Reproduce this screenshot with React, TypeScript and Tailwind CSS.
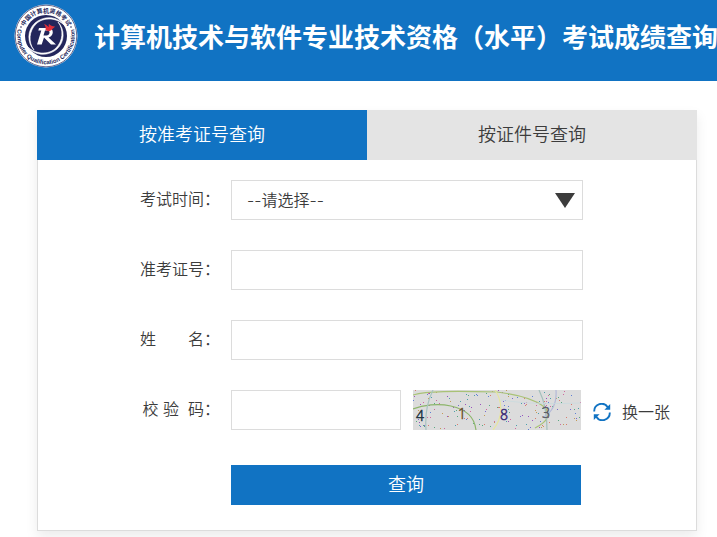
import { useState } from "react";
import clsx from "clsx";

const tabs = [
  { id: "ticket", label: "按准考证号查询" },
  { id: "cert", label: "按证件号查询" }
];

const SPECK_COLORS = ["#7a6ad0", "#cf6a9e", "#5aa982", "#c49a58", "#5f80d4", "#9a52bd", "#4d9fac", "#d87c6e"];

// small seeded generator, keeps the specks stable between renders
function makeSpecks(count: number) {
  let seed = 41837;
  const next = () => {
    seed = (seed * 16807) % 2147483647;
    return seed / 2147483647;
  };
  return Array.from({ length: count }, () => ({
    x: Math.floor(next() * 168),
    y: Math.floor(next() * 40),
    color: SPECK_COLORS[Math.floor(next() * SPECK_COLORS.length)]
  }));
}

const specks = makeSpecks(170);

function Logo() {
  return (
    <svg viewBox="0 0 64 64" className="size-16 shrink-0" role="img" aria-label="中国计算机资格考试">
      <defs>
        <path id="ring-top" d="M8.5 32a23.5 23.5 0 0 1 47 0" />
        <path id="ring-bottom" d="M4.2 24a28.8 28.8 0 1 0 55.6 0" />
      </defs>
      <circle cx="32" cy="32" r="31.5" fill="#fff" />
      <circle cx="32" cy="32" r="30.8" fill="none" stroke="#25285c" strokeWidth="0.7" />
      <text fontSize="6" fontWeight="700" fill="#25285c" className="font-['Noto_Sans_CJK_SC',sans-serif]">
        <textPath href="#ring-top" startOffset="50%" textAnchor="middle">
          中国计算机资格考试
        </textPath>
      </text>
      <text fontSize="6" fontWeight="700" fill="#25285c" className="font-['Liberation_Sans',sans-serif]">
        <textPath href="#ring-bottom" startOffset="50%" textAnchor="middle">
          Computer Qualification Certification
        </textPath>
      </text>
      <circle cx="7" cy="23" r="0.8" fill="#25285c" />
      <circle cx="57" cy="23" r="0.8" fill="#25285c" />
      <circle cx="32" cy="32" r="21" fill="#23265b" />
      {/* two crescents chasing each other round the R */}
      <path d="M51 22C43 13 29 13 22 20s-8 18-2 26c-7-7-7-20 1-27s22-8 30 3z" fill="#fff" stroke="#fff" strokeWidth="0.6" />
      <path d="M13 42c8 9 22 9 29 2s8-18 2-26c7 7 7 20-1 27s-22 8-30-3z" fill="#fff" stroke="#fff" strokeWidth="0.6" />
      <path
        d="M25 24h9.500c6 0 5.500 8.500 0 9.500l7.500 7h-5l-7-7-2.300 7H23l4.300-14h-3zM31 26.500l-1.500 5h3c3.500 0 4.200-5 1-5z"
        fill="#fff"
      />
      <path d="M30 20c2 .5 3 2 5 3-.5-1.500-.4-2 0-3 1.500 1.500 3 2.500 6 2.500-1 1.500-2.500 2-3.500 3.500-1.500 1.500-4 1.500-6 0 .5-2 0-4-1.500-6z" fill="#df2f3a" />
    </svg>
  );
}

function Captcha() {
  return (
    <svg viewBox="0 0 168 40" className="ml-3 h-10 w-[168px] shrink-0" role="img" aria-label="校验码图片">
      <rect width="168" height="40" fill="#dcdcdc" />
      {specks.map((s, i) => (
        <rect key={i} x={s.x} y={s.y} width="1" height="1" fill={s.color} />
      ))}
      <g fill="none" strokeWidth="1.2">
        <path d="M0 5C14 1 40 1 84 2c24 3 38 8 46 14 10 8 4 16-8 22" stroke="#a9c276" />
        <path d="M0 19C20 11 60 12 63 40" stroke="#8db56b" />
        <path d="M20 0c-6 12-8 26-7 40" stroke="#a8c4c0" />
        <path d="M82 0c8 12 8 28-2 40" stroke="#e6e6a0" />
        <path d="M126 0c6 12 8 26 8 40" stroke="#a3bfbb" />
        <path d="M143 0c1 14-4 22-12 27" stroke="#b4b9d8" />
        <path d="M88 10c24 4 54 4 80 3" stroke="#c9dade" strokeWidth="0.8" />
      </g>
      <g fontSize="14" strokeWidth="0.5" className="font-['Noto_Sans',sans-serif]">
        <text x="3" y="31" fill="#1d3340" stroke="#1d3340">4</text>
        <text x="45" y="29" fill="#6b5030" stroke="#6b5030">1</text>
        <text x="87" y="30" fill="#3a2b78" stroke="#3a2b78">8</text>
        <text x="129" y="28" fill="#5a5c68" stroke="#5a5c68">3</text>
      </g>
    </svg>
  );
}

function RefreshIcon() {
  return (
    <svg viewBox="0 0 18 18" className="size-[18px]" aria-hidden="true">
      <path d="M1.200 8.400A7.400 7.400 0 0 1 14.800 4.200M16.800 9.600A7.400 7.400 0 0 1 3.200 13.800" fill="none" stroke="#1173c3" strokeWidth="1.9" />
      <path d="M17.200 1v5.800h-5.800zM.8 17v-5.800h5.800z" fill="#1173c3" />
    </svg>
  );
}

const labelClass = "w-[182px] shrink-0 whitespace-pre text-right leading-[38px]";
const fieldClass = "h-10 min-w-0 border border-[#dcdcdc] bg-white px-[15px] outline-none";

export default function App() {
  const [tab, setTab] = useState("ticket");

  return (
    <div className="min-h-screen overflow-hidden bg-white font-[Inter,'Noto_Sans_CJK_SC',sans-serif] text-base font-[350] text-[#3c3c3c]">
      <header className="flex h-[81px] gap-4 bg-[#1173c3] pt-1 pl-[14px]">
        <Logo />
        <h1 className="pt-3.5 text-[26px] leading-10 font-bold whitespace-nowrap text-white">
          计算机技术与软件专业技术资格（水平）考试成绩查询
        </h1>
      </header>

      <main className="pt-[29px] pr-5 pb-[6px] pl-[37px]">
        <div className="shadow-[0_6px_12px_rgba(0,0,0,0.08)]">
          <div role="tablist" className="grid grid-cols-2">
            {tabs.map((t) => (
              <button
                key={t.id}
                type="button"
                role="tab"
                aria-selected={tab === t.id}
                onClick={() => setTab(t.id)}
                className={clsx(
                  "h-[50px] text-lg",
                  tab === t.id ? "bg-[#1173c3] text-white" : "bg-[#e4e4e4]"
                )}
              >
                {t.label}
              </button>
            ))}
          </div>

          <form
            onSubmit={(e) => e.preventDefault()}
            className="flex flex-col gap-[30px] border border-t-0 border-[#dcdcdc] pt-5 pb-[25px]"
          >
            <div className="flex gap-[11px]">
              <label htmlFor="time" className={labelClass}>考试时间：</label>
              <div className="relative w-[352px]">
                <select id="time" className={clsx(fieldClass, "w-full appearance-none")}>
                  <option>--请选择--</option>
                </select>
                <svg viewBox="0 0 20 15" className="pointer-events-none absolute top-[13px] right-2 h-[15px] w-5" aria-hidden="true">
                  <path d="M0 0h20L10 15z" fill="#3c3c3c" />
                </svg>
              </div>
            </div>

            <div className="flex gap-[11px]">
              <label htmlFor="number" className={labelClass}>准考证号：</label>
              <input id="number" type="text" className={clsx(fieldClass, "w-[352px]")} />
            </div>

            <div className="flex gap-[11px]">
              <label htmlFor="name" className={labelClass}>姓　　名：</label>
              <input id="name" type="text" className={clsx(fieldClass, "w-[352px]")} />
            </div>

            <div className="flex gap-[11px]">
              <label htmlFor="code" className={labelClass}>{"校 验  码："}</label>
              <div className="flex">
                <input id="code" type="text" className={clsx(fieldClass, "w-[170px]")} />
                <Captcha />
                <button type="button" className="ml-3 flex items-center gap-[11px] pt-1 whitespace-nowrap">
                  <RefreshIcon />
                  换一张
                </button>
              </div>
            </div>

            <button type="submit" className="mt-[5px] ml-[193px] h-10 w-[350px] bg-[#1173c3] text-lg text-white">
              查询
            </button>
          </form>
        </div>
      </main>
    </div>
  );
}
